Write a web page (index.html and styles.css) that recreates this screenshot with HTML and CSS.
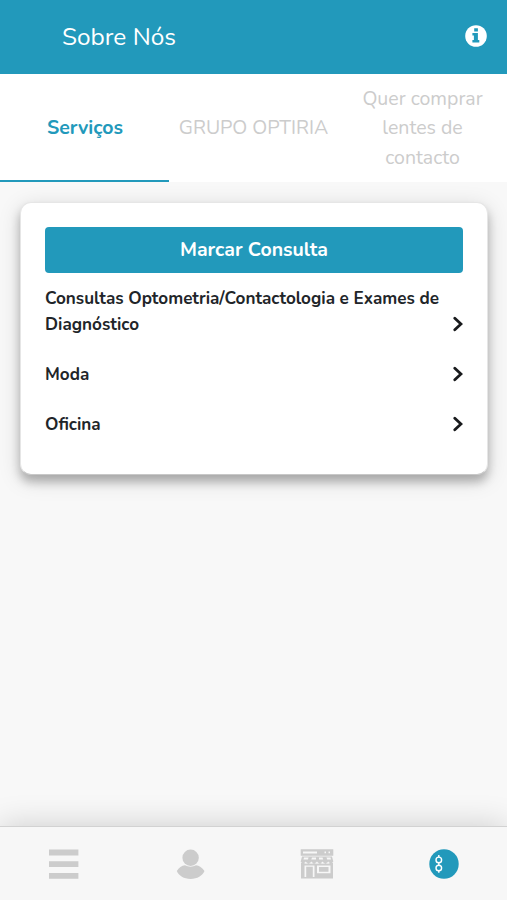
FILE: index.html
```html
<!DOCTYPE html>
<html lang="pt">
<head>
<meta charset="utf-8">
<meta name="viewport" content="width=device-width, initial-scale=1">
<title>Sobre Nós</title>
<link rel="stylesheet" href="styles.css">
</head>
<body>
<header class="header">
  <h1 class="title">Sobre Nós</h1>
  <svg class="info" viewBox="0 0 22 22"><circle cx="11" cy="11" r="10.8" fill="#fff"/><path d="M9.200 3.200h3.700v3.300H9.200zM7.400 7.900h5.500v7h1.400v2.700H7.400v-2.700h1.500v-4.300H7.400z" fill="#2299bb"/></svg>
</header>
<nav class="tabs">
  <a class="tab active">Serviços</a>
  <a class="tab">GRUPO OPTIRIA</a>
  <a class="tab">Quer comprar<br>lentes de<br>contacto</a>
</nav>
<main class="content">
  <section class="card">
    <button class="book">Marcar Consulta</button>
    <ul class="list">
      <li class="row"><span class="label">Consultas Optometria/Contactologia e Exames de<br>Diagnóstico</span><svg class="chevron" viewBox="0 0 10 16"><path d="M1.800 2.200 8 8l-6.200 5.800"/></svg></li>
      <li class="row"><span class="label">Moda</span><svg class="chevron" viewBox="0 0 10 16"><path d="M1.800 2.200 8 8l-6.200 5.800"/></svg></li>
      <li class="row"><span class="label">Oficina</span><svg class="chevron" viewBox="0 0 10 16"><path d="M1.800 2.200 8 8l-6.200 5.800"/></svg></li>
    </ul>
  </section>
</main>
<footer class="bar">
  <a class="item"><svg viewBox="0 0 34 34"><path d="M3 2.600h29.400v5.800H3zM3 14.300h29.400v5.800H3zM3 26h29.400v5.800H3z"/></svg></a>
  <a class="item"><svg viewBox="0 0 34 34"><circle cx="17.600" cy="10.700" r="8.200"/><path d="M3.800 24c2-3.500 5-5.300 8.200-5.700 3.300 1.900 7.700 1.900 11 0 3.200.4 6.200 2.200 8.500 5.700-2 4.700-7.200 7.900-13.900 7.900S5.800 28.700 3.800 24z"/></svg></a>
  <a class="item"><svg viewBox="0 0 34 34"><path fill-rule="evenodd" d="M.700 2.300h32.600v6.400H.700zM3 4.500v2h14v-2zM24.500 4.500v1.700H26V4.500zM28.500 4.500v1.700H30V4.500z"/><path fill-rule="evenodd" d="M2 9.500h30l1.300 5c-1 2-3.800 2-5 0-1.500 2-4.500 2-5.700 0-1.500 2-4.300 2-5.600 0-1.500 2-4.300 2-5.600 0-1.500 2-4.300 2-5.700 0-1.200 2-4 2-5 0zM4 10.500l-.5 2h4.500l.5-2zM12 10.500l-.7 2h4.700v-2zM19 10.500v2h4.200l-.7-2zM26.500 10.500l.7 2H31l-.5-2z"/><path fill-rule="evenodd" d="M1 16h3c1 1 3 1 4.500 0 1.500 1 4 1 5.500 0 1.500 1 4.500 1 6 0 1.500 1 4 1 5.500 0 1.500 1 3.500 1 4.500 0h3v15.500H1zM4.500 18.500V30h1.700V19.700h6.600V30h1.700V18.500zM17 18.500v7.800h13.500v-7.800zM19 20h9.500v4.800H19z"/></svg></a>
  <a class="item on"><svg viewBox="0 0 34 34"><circle cx="17" cy="17" r="14.700"/><g class="mark"><circle cx="11.800" cy="12.900" r="2.800"/><circle cx="11.800" cy="21" r="2.800"/><path d="M11.800 8v2M11.800 15.700V18M11.800 23.800v2"/></g></svg></a>
</footer>
</body>
</html>
```
FILE: styles.css
```css
* { box-sizing: border-box; }
body {
  margin: 0;
  height: 900px;
  display: flex;
  flex-direction: column;
  overflow: hidden;
  background: #f8f8f8;
  color: #212529;
  font-family: Nunito, Lato, sans-serif;
}
.header {
  height: 74px;
  flex: none;
  display: flex;
  align-items: center;
  justify-content: space-between;
  padding: 0 20px 2px 62px;
  background: #2299bb;
  color: #fff;
}
.title { margin: 0; padding-top: 2px; font-size: 24.400px; font-weight: 400; }
.info { width: 22px; height: 22px; }
.tabs {
  height: 108px;
  flex: none;
  display: grid;
  grid-template-columns: repeat(3, 1fr);
  background: #fff;
}
.tab {
  display: flex;
  align-items: center;
  justify-content: center;
  text-align: center;
  padding-top: 2px;
  border-bottom: 2px solid transparent;
  color: #ccc;
  font-size: 19.5px;
  line-height: 29.3px;
}
.tab.active { padding-left: 1px; color: #2299bb; font-weight: 700; border-color: #2299bb; }
.content { flex: 1; padding: 20px 19px 0 20px; }
.card {
  height: 273px;
  padding: 24px;
  border: 1px solid #e6e6e6;
  border-bottom-color: #c8c8c8;
  border-radius: 11px;
  background: #fff;
  box-shadow: 0 7px 10px rgba(0, 0, 0, .24), 0 5px 22px rgba(0, 0, 0, .15);
}
.book {
  display: block;
  width: 100%;
  height: 46px;
  padding: 0;
  border: 0;
  border-radius: 4px;
  background: #2299bb;
  color: #fff;
  font: 700 19.5px/46px Nunito, Lato, sans-serif;
}
.list { list-style: none; margin: 13px 0 0; padding: 0; }
.row {
  display: flex;
  justify-content: space-between;
  align-items: flex-end;
  margin-bottom: 24px;
  font-size: 17.100px;
  font-weight: 700;
  line-height: 26px;
  white-space: nowrap;
}
.label { flex: none; }
.chevron {
  width: 10px;
  height: 16px;
  margin-bottom: 6px;
  flex: none;
  fill: none;
  stroke: #181a1c;
  stroke-width: 2.8;
  stroke-linecap: round;
}
.bar {
  height: 74px;
  flex: none;
  display: grid;
  grid-template-columns: repeat(4, 1fr);
  background: #f7f7f7;
  border-top: 1px solid #d2d2d2;
  box-shadow: 0 0 32px rgba(0, 0, 0, .18);
}
.item { display: flex; align-items: center; justify-content: center; padding-top: 1px; }
.item svg { width: 34px; height: 34px; fill: #ccc; }
.item.on svg { fill: #2299bb; }
.item .mark { fill: none; stroke: #fff; stroke-width: 1.4; }
```
